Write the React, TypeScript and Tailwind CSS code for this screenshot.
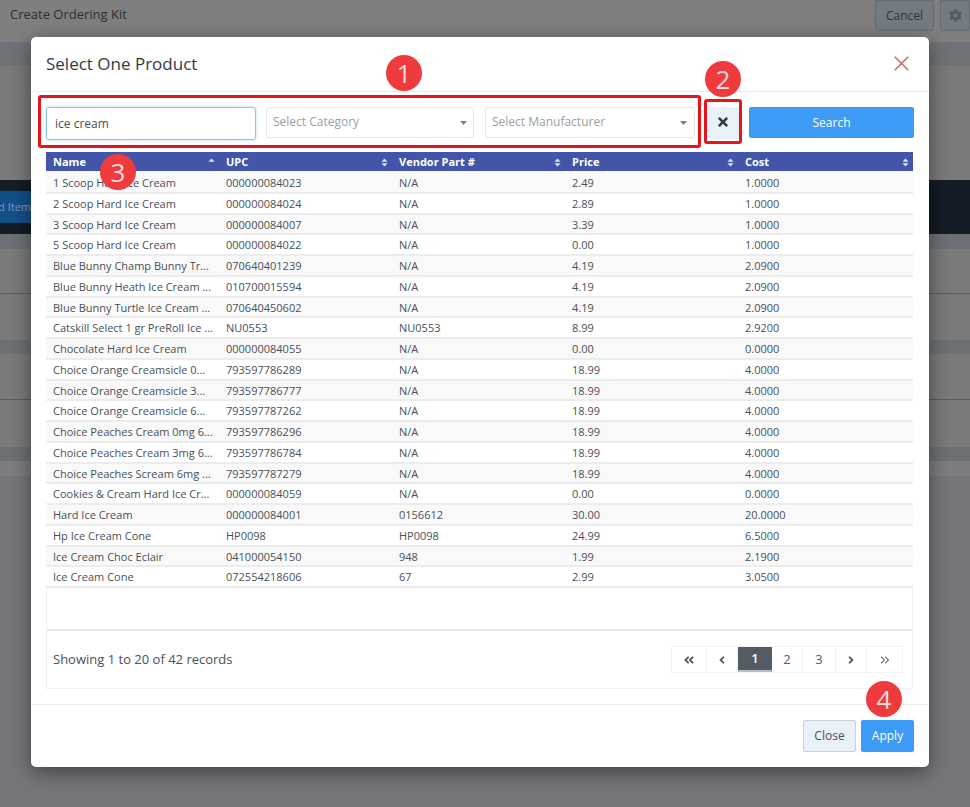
import { FaAngleDoubleLeft, FaAngleLeft, FaAngleRight, FaCog, FaTimes } from 'react-icons/fa'
import { ChevronsRight, X } from 'lucide-react'

const rows = [
  ['1 Scoop Hard Ice Cream', '000000084023', 'N/A', '2.49', '1.0000'],
  ['2 Scoop Hard Ice Cream', '000000084024', 'N/A', '2.89', '1.0000'],
  ['3 Scoop Hard Ice Cream', '000000084007', 'N/A', '3.39', '1.0000'],
  ['5 Scoop Hard Ice Cream', '000000084022', 'N/A', '0.00', '1.0000'],
  ['Blue Bunny Champ Bunny Tr...', '070640401239', 'N/A', '4.19', '2.0900'],
  ['Blue Bunny Heath Ice Cream ...', '010700015594', 'N/A', '4.19', '2.0900'],
  ['Blue Bunny Turtle Ice Cream ...', '070640450602', 'N/A', '4.19', '2.0900'],
  ['Catskill Select 1 gr PreRoll Ice ...', 'NU0553', 'NU0553', '8.99', '2.9200'],
  ['Chocolate Hard Ice Cream', '000000084055', 'N/A', '0.00', '0.0000'],
  ['Choice Orange Creamsicle 0...', '793597786289', 'N/A', '18.99', '4.0000'],
  ['Choice Orange Creamsicle 3...', '793597786777', 'N/A', '18.99', '4.0000'],
  ['Choice Orange Creamsicle 6...', '793597787262', 'N/A', '18.99', '4.0000'],
  ['Choice Peaches Cream 0mg 6...', '793597786296', 'N/A', '18.99', '4.0000'],
  ['Choice Peaches Cream 3mg 6...', '793597786784', 'N/A', '18.99', '4.0000'],
  ['Choice Peaches Scream 6mg ...', '793597787279', 'N/A', '18.99', '4.0000'],
  ['Cookies & Cream Hard Ice Cr...', '000000084059', 'N/A', '0.00', '0.0000'],
  ['Hard Ice Cream', '000000084001', '0156612', '30.00', '20.0000'],
  ['Hp Ice Cream Cone', 'HP0098', 'HP0098', '24.99', '6.5000'],
  ['Ice Cream Choc Eclair', '041000054150', '948', '1.99', '2.1900'],
  ['Ice Cream Cone', '072554218606', '67', '2.99', '3.0500'],
]

const columns = ['Name', 'UPC', 'Vendor Part #', 'Price', 'Cost']

function SortIcon({ onlyUp }: { onlyUp?: boolean }) {
  return (
    <svg width="7" height="9" viewBox="0 0 7 9" className="shrink-0 fill-[#dfe4f5]">
      <path d="M3.5 0.5 L6.5 3.7 L0.5 3.7 Z" />
      {!onlyUp && <path d="M3.5 8.5 L6.5 5.3 L0.5 5.3 Z" />}
    </svg>
  )
}

function SelectBox({ label, className }: { label: string; className: string }) {
  return (
    <div className={`${className} h-[31px] flex items-center justify-between border border-[#e3e6ea] rounded-[3px] bg-white`}>
      <span className="text-[12px] text-[#9a9ea3] pb-[1px]">{label}</span>
      <svg width="7" height="4" viewBox="0 0 7 4" className="fill-[#7b7f84]">
        <path d="M0 0 H7 L3.5 4 Z" />
      </svg>
    </div>
  )
}

function Badge({ n, className }: { n: number; className: string }) {
  return (
    <div className={`absolute w-9 h-9 rounded-full bg-[#ef3b3d] flex items-center justify-center text-[26px] font-medium leading-none text-[#f6dcdc] ${className}`}>
      {n}
    </div>
  )
}

function PageBtn({ children, className, active }: { children: React.ReactNode; className: string; active?: boolean }) {
  return (
    <div
      className={`${className} flex items-center justify-center text-[13px] ${
        active ? 'bg-[#555b65] text-white border-b-2 border-[#b9bcc0] font-semibold' : 'border-r border-[#f3f3f3] text-[#555b65]'
      }`}
    >
      {children}
    </div>
  )
}

function Backdrop() {
  return (
    <div className="h-[807px] flex flex-col bg-[#7a7a7a]">
      <div className="h-[42px] shrink-0 flex items-start px-[10px] bg-[#7f7f7f]">
        <span className="mt-[5px] text-[13px] text-[#2e2e2e]">Create Ordering Kit</span>
        <div className="ml-auto flex gap-[6px] mr-[-10px]">
          <div className="w-[59px] h-[31px] flex items-center justify-center bg-[#747b80] border border-[#666c70] rounded-b-[3px] text-[12px] text-[#2f3336]">
            Cancel
          </div>
          <div className="w-[30px] h-[31px] flex items-center justify-center bg-[#747b80] border border-[#666c70] rounded-b-[3px] text-[#555a5e]">
            <FaCog size={13} />
          </div>
        </div>
      </div>
      <div className="h-[24px] shrink-0 bg-[#6f7378]" />
      <div className="h-[114px] shrink-0 border-t border-[#7d7d7d]" />
      <div className="h-[54px] shrink-0 flex items-center bg-[#141c26]">
        <div className="w-[31px] h-[32px] flex items-center justify-end overflow-hidden bg-[#134f87] text-[11px] whitespace-nowrap text-[#7f9dbb]">
          Add Item
        </div>
      </div>
      <div className="h-[15px] shrink-0 bg-[#6d7176]" />
      <div className="h-[45px] shrink-0 border-b border-[#5c5c5c]" />
      <div className="h-[46px] shrink-0" />
      <div className="h-[14px] shrink-0 bg-[#6d7176]" />
      <div className="h-[46px] shrink-0 border-b border-[#5c5c5c]" />
      <div className="h-[47px] shrink-0" />
      <div className="h-[14px] shrink-0 bg-[#6d7176]" />
      <div className="h-[15px] shrink-0 bg-[#7b7d80]" />
      <div className="flex-1 bg-[#75767b]" />
    </div>
  )
}

export default function App() {
  return (
    <div className="relative h-[807px] overflow-hidden font-['Open_Sans',sans-serif]">
      <Backdrop />

      <div className="absolute left-[31px] top-[37px] w-[898px] h-[730px] flex flex-col bg-white rounded-[5px] shadow-[0_5px_20px_rgba(0,0,0,0.45)]">
        <div className="h-[55px] shrink-0 flex items-center justify-between px-[15px] border-b border-[#e9ecef]">
          <h2 className="text-[17px] font-medium text-[#343a40] pb-[1px]">Select One Product</h2>
          <X size={25} strokeWidth={1.6} className="text-[#c9706a] mb-[2px]" />
        </div>

        <div className="h-[612px] shrink-0 px-[15px] pt-[15px]">
          <div className="flex items-start">
            <div className="w-[210px] h-[33px] flex items-center pl-[8px] border border-[#8fc3e6] rounded-[3px] shadow-[0_0_3px_rgba(100,170,220,0.5)] text-[12px] text-[#495057]">
              ice cream
            </div>
            <SelectBox label="Select Category" className="w-[208px] ml-[10px] pl-[6px] pr-[6px]" />
            <SelectBox label="Select Manufacturer" className="w-[210px] ml-[11px] pl-[6px] pr-[7px]" />
            <div className="w-[31px] h-[32px] ml-[13px] pr-[2px] pb-[2px] flex items-center justify-center bg-[#e8f1f8] text-[#343a40]">
              <FaTimes size={14} />
            </div>
            <div className="w-[165px] h-[31px] ml-[10px] flex items-center justify-center bg-[#3b9bf5] rounded-[2px] text-[12px] text-white">
              Search
            </div>
          </div>

          <div className="mt-[12px] w-[867px] h-[537px] flex flex-col border-x border-b border-[#f0f0f0]">
            <div className="h-[479px] shrink-0 border-b-2 border-[#e8e8e8]">
              <table className="w-[867px] ml-[-1px] table-fixed border-separate border-spacing-0 text-[11px]">
                <colgroup>
                  <col className="w-[173px]" />
                  <col className="w-[173px]" />
                  <col className="w-[173px]" />
                  <col className="w-[173px]" />
                  <col className="w-[175px]" />
                </colgroup>
                <thead>
                  <tr className="text-white">
                    {columns.map((c, i) => (
                      <th key={c} className="h-[21px] p-0 font-bold text-left border-b-2 border-[#f9f9f9] bg-[#4355a8]">
                        <div className="flex items-center justify-between pl-[7px] pr-[4px] pt-[1px]">
                          <span>{c}</span>
                          <SortIcon onlyUp={i === 0} />
                        </div>
                      </th>
                    ))}
                  </tr>
                </thead>
                <tbody>
                  {rows.map((r, i) => (
                    <tr key={i} className={`text-[#495057] ${i % 2 === 0 ? 'bg-[#f9f9f9]' : 'bg-white'}`}>
                      {r.map((v, j) => (
                        <td key={j} className="h-[20.75px] p-0 pl-[7px] pt-[2px] border-b-2 border-[#ececec] whitespace-nowrap overflow-hidden">
                          {v}
                        </td>
                      ))}
                    </tr>
                  ))}
                </tbody>
              </table>
            </div>
            <div className="flex-1 flex items-center justify-between pl-[6px] pr-[9px]">
              <span className="text-[13px] text-[#495057]">Showing 1 to 20 of 42 records</span>
              <div className="h-[27px] flex border-y border-l border-[#f3f3f3]">
                <PageBtn className="w-[35px]"><FaAngleDoubleLeft size={12} /></PageBtn>
                <PageBtn className="w-[31px]"><FaAngleLeft size={12} /></PageBtn>
                <PageBtn className="w-[34px]" active>1</PageBtn>
                <PageBtn className="w-[31px]">2</PageBtn>
                <PageBtn className="w-[33px]">3</PageBtn>
                <PageBtn className="w-[31px]"><FaAngleRight size={12} /></PageBtn>
                <PageBtn className="w-[36px]"><ChevronsRight size={14} strokeWidth={1.8} /></PageBtn>
              </div>
            </div>
          </div>
        </div>

        <div className="flex-1 flex items-start justify-end gap-[5px] px-[15px] pt-[15px] border-t border-[#ececec]">
          <div className="w-[53px] h-[32px] flex items-center justify-center bg-[#e8f1f8] border border-[#c9d2d9] rounded-[2px] text-[12px] text-[#495057]">
            Close
          </div>
          <div className="w-[53px] h-[32px] flex items-center justify-center bg-[#3b9bf5] rounded-[2px] text-[12px] text-white">
            Apply
          </div>
        </div>
      </div>

      <div className="absolute left-[38px] top-[95px] w-[663px] h-[53px] border-[3.5px] border-[#e8141c] rounded-[3px]" />
      <div className="absolute left-[704px] top-[99px] w-[38px] h-[45px] border-[3.5px] border-[#e8141c] rounded-[3px]" />
      <Badge n={1} className="left-[386px] top-[55px]" />
      <Badge n={2} className="left-[705px] top-[61px]" />
      <Badge n={3} className="left-[100px] top-[154px]" />
      <Badge n={4} className="left-[866px] top-[681px]" />
    </div>
  )
}
